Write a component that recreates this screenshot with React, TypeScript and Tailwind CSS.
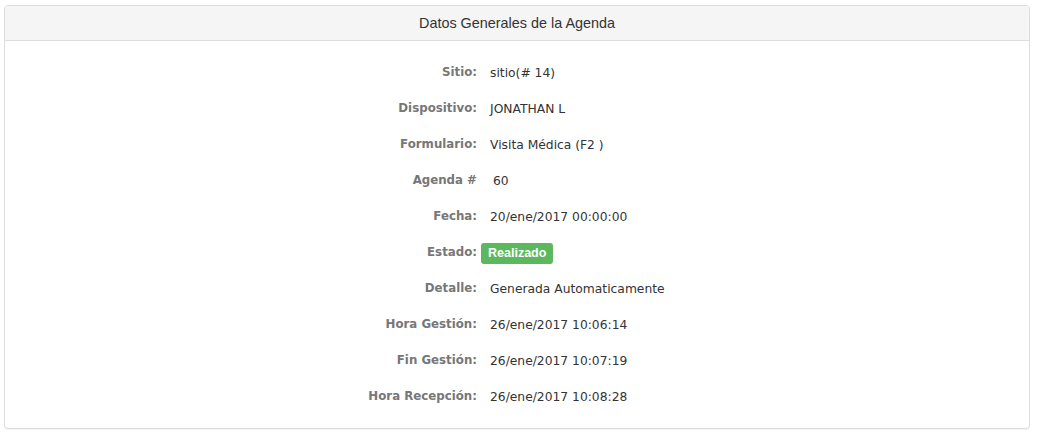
import React from "react";

const rows: { label: string; value: string; offset: string; badge?: boolean }[] = [
  { label: "Sitio:", value: "sitio(# 14)", offset: "ml-[13px]" },
  { label: "Dispositivo:", value: "JONATHAN L", offset: "ml-[13px]" },
  { label: "Formulario:", value: "Visita Médica (F2 )", offset: "ml-[13px]" },
  { label: "Agenda #", value: "60", offset: "ml-[16px]" },
  { label: "Fecha:", value: "20/ene/2017 00:00:00", offset: "ml-[13px]" },
  { label: "Estado:", value: "Realizado", offset: "ml-[4px]", badge: true },
  { label: "Detalle:", value: "Generada Automaticamente", offset: "ml-[13px]" },
  { label: "Hora Gestión:", value: "26/ene/2017 10:06:14", offset: "ml-[13px]" },
  { label: "Fin Gestión:", value: "26/ene/2017 10:07:19", offset: "ml-[13px]" },
  { label: "Hora Recepción:", value: "26/ene/2017 10:08:28", offset: "ml-[13px]" },
];

export default function App() {
  return (
    <div className="w-[1039px] h-[433px] bg-white pt-[5px] pl-[4px]">
      <div className="w-[1026px] border border-[#dddddd] rounded-[4px] shadow-[0_1px_1px_rgba(0,0,0,0.05)] bg-white overflow-hidden">
        <div
          className="h-[35px] pt-[1px] bg-[#f5f5f5] border-b border-[#dddddd] flex items-center justify-center text-[14.4px] text-[#333333]"
          style={{ fontFamily: '"Liberation Sans", Arial, sans-serif' }}
        >
          Datos Generales de la Agenda
        </div>
        <div
          className="pt-[14px] pb-[13px]"
          style={{ fontFamily: '"DejaVu Sans", Verdana, sans-serif' }}
        >
          {rows.map((r) => (
            <div key={r.label} className="h-[36px] flex items-center">
              <div className="w-[472px] text-right font-bold text-[11.8px] text-[#777777]">
                {r.label}
              </div>
              {r.badge ? (
                <span
                  className={`${r.offset} h-[21px] px-[7px] flex items-center rounded-[3px] bg-[#5cb85c] text-white font-bold text-[12.5px]`}
                  style={{ fontFamily: '"Liberation Sans", Arial, sans-serif' }}
                >
                  {r.value}
                </span>
              ) : (
                <div className={`${r.offset} text-[12.3px] text-[#333333]`}>{r.value}</div>
              )}
            </div>
          ))}
        </div>
      </div>
    </div>
  );
}
